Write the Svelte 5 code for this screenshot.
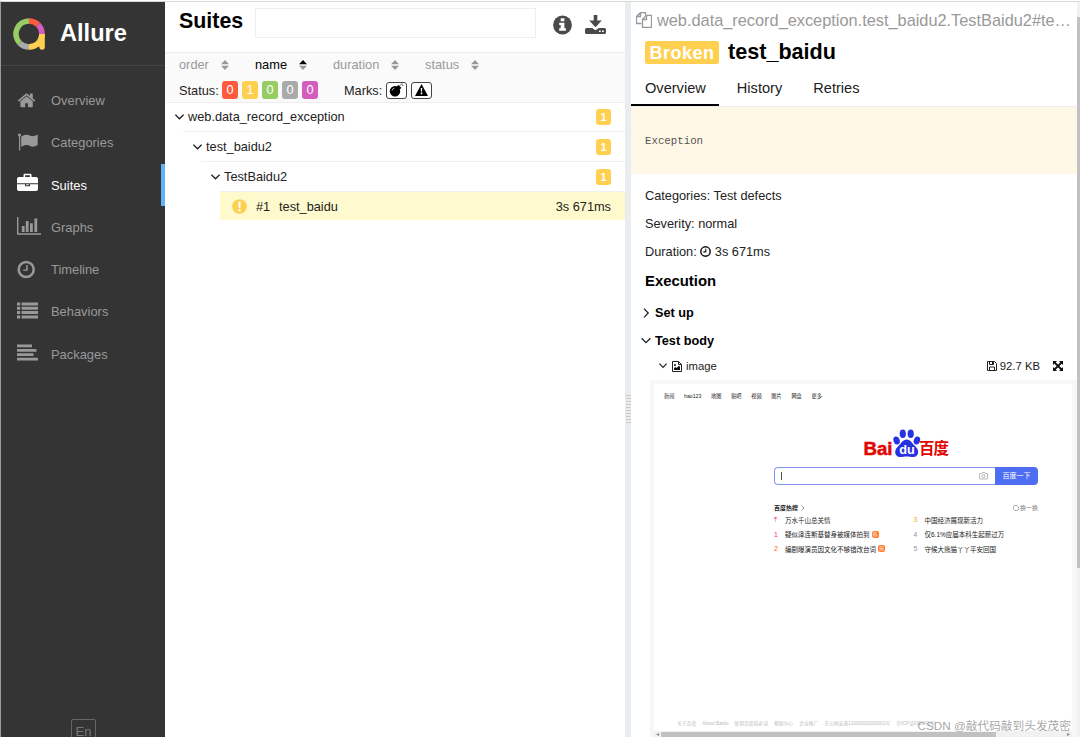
<script lang="ts">
  let activeNav = "Suites";
  let activeTab = "Overview";
  let search = "";

  const nav = ["Overview", "Categories", "Suites", "Graphs", "Timeline", "Behaviors", "Packages"];
  const sorters = [
    { name: "order", width: 76 },
    { name: "name", width: 78 },
    { name: "duration", width: 92 },
    { name: "status", width: 60 },
  ];
  const statuses = [
    { name: "failed", count: 0 },
    { name: "broken", count: 1 },
    { name: "passed", count: 0 },
    { name: "skipped", count: 0 },
    { name: "unknown", count: 0 },
  ];
  const tree = ["web.data_record_exception", "test_baidu2", "TestBaidu2"];
  const tabs = ["Overview", "History", "Retries"];

  const links = ["新闻", "hao123", "地图", "贴吧", "视频", "图片", "网盘", "更多"];
  const hot = [
    { rank: "⤒", color: "#fe2d46", text: "万水千山总关情", tag: false },
    { rank: "3", color: "#faa90e", text: "中国经济展现新活力", tag: false },
    { rank: "1", color: "#fe2d46", text: "疑似泽连斯基替身被媒体拍到", tag: true },
    { rank: "4", color: "#9195a3", text: "仅6.1%应届本科生起薪过万", tag: false },
    { rank: "2", color: "#ff6600", text: "编剧曝演员因文化不够错改台词", tag: true },
    { rank: "5", color: "#9195a3", text: "守候大熊猫丫丫平安回国", tag: false },
  ];
  const footer = ["关于百度", "About Baidu", "使用百度前必读", "帮助中心", "企业推广", "京公网安备11000002000001号", "京ICP证030173号"];
</script>

<div class="page">
  <aside class="side">
    <div class="brand">
      <svg width="32" height="32" viewBox="0 0 32 32" fill="none" stroke-width="5.600">
        <path d="M6.800 25.200A13 13 0 0 1 16 3" stroke="#97cc64" />
        <path d="M16 3a13 13 0 0 1 9.200 3.800" stroke="#fd5a3e" />
        <path d="M25.200 6.800A13 13 0 0 1 29 16" stroke="#d35ebe" />
        <path d="M16 29a13 13 0 0 1-9.200-3.800" stroke="#aaa" />
        <path d="M29 16a13 13 0 0 1-13 13" stroke="#ffd050" />
        <path d="M26.500 16h5.300v13q0 2.700-2.700 2.700T26.400 29l-3-2z" fill="#ffd050" />
      </svg>
      <span>Allure</span>
    </div>
    <nav>
      {#each nav as item}
        <div class="nav-item" class:active={item === activeNav}>
          <svg width="24" height="24" viewBox="0 0 24 24" fill="currentColor">
            {#if item === "Overview"}
              <g transform="translate(0 1.8) scale(.0107)">
                <path d="M1472 992v480q0 26-19 45t-45 19h-384v-384h-256v384h-384q-26 0-45-19t-19-45v-480q0-1 .5-3t.5-3l575-474 575 474q1 2 1 6zm223-69l-62 74q-8 9-21 11h-3q-13 0-21-7l-692-577-692 577q-12 8-24 7-13-2-21-11l-62-74q-8-10-7-23.5t11-21.5l719-599q32-26 76-26t76 26l244 204v-195q0-14 9-23t23-9h192q14 0 23 9t9 23v408l219 182q10 8 11 21.5t-7 23.5z" />
              </g>
            {:else if item === "Categories"}
              <circle cx="2.5" cy="4" r="1.6" />
              <path d="M2 4h1.2v15.5H2zM4.2 5.4c4-2.3 6-2.2 9.2-.6 2 1 4 .4 7.3-1.2V14c-3.4 2-5.3 2.1-7.7.9-2.8-1.4-5-1.1-8.8 1z" />
            {:else if item === "Suites"}
              <path d="M6.5 4V2Q6.5.8 7.7.8h5.6q1.2 0 1.2 1.2v2H19q2 0 2 2v4.3H0V6q0-2 2-2zm1.6 0h4.8V2.3H8.1zM0 11.3h8v2h5v-2h8V16q0 2-2 2H2q-2 0-2-2zm9.2 0h2.6v1H9.2z" />
            {:else if item === "Graphs"}
              <path d="M0 2h1.4v16.2H24v1.6H0zM4.8 11h2.8v6H4.8zM8.8 6h2.8v11H8.8zM13 8.3h2.8V17H13zM17.4 3.6h2.8V17h-2.8z" />
            {:else if item === "Timeline"}
              <circle cx="9.2" cy="11.5" r="7.5" fill="none" stroke="currentColor" stroke-width="2.5" />
              <path d="M9.2 7h1.5v5.8H6.2v-1.4h3z" />
            {:else if item === "Behaviors"}
              <path d="M0 2.5h3.2v3H0zM4.6 2.5H21v3H4.6zM0 6.8h3.2v3H0zM4.6 6.8H21v3H4.6zM0 11.1h3.2v3H0zM4.6 11.1H21v3H4.6zM0 15.4h3.2v3H0zM4.6 15.4H21v3H4.6z" />
            {:else}
              <path d="M0 2.5h15v2.8H0zM0 6.9h19.5v2.8H0zM0 11.3h16.5v2.8H0zM0 15.7h21v2.8H0z" />
            {/if}
          </svg>
          <span>{item}</span>
        </div>
      {/each}
    </nav>
    <button class="lang">En</button>
  </aside>

  <section class="suites">
    <header>
      <h1>Suites</h1>
      <input bind:value={search} aria-label="Search" />
      <svg width="19" height="20" viewBox="0 0 19 20">
        <circle cx="9.5" cy="10" r="9.4" fill="#4a4a4a" />
        <path d="M7.7 3.2h3.7v3H7.7zM6.2 7.7h5.2v5.6h1.5v2.5H6.2v-2.5h1.5V10H6.2z" fill="#fff" />
      </svg>
      <svg class="download" width="22" height="20" viewBox="0 0 22 20" fill="#4a4a4a">
        <path d="M8.7 0h3.6v5.5h4.5l-6.3 6.8L4.2 5.5h4.5z" />
        <path fill-rule="evenodd" d="M1.5 13h5.7l3.3 2.3 3.3-2.3h5.7q1.5 0 1.5 1.5v3q0 1.5-1.5 1.5h-18Q0 19 0 17.500v-3Q0 13 1.500 13zM14 15.500v1.500h1.700v-1.500zm3 0v1.500h1.700v-1.500z" />
      </svg>
    </header>

    <div class="filters">
      <div class="sorters">
        {#each sorters as sorter}
          <div class="sorter" class:on={sorter.name === "name"} style={`width:${sorter.width}px`}>
            <span>{sorter.name}</span>
            <svg width="8" height="10" viewBox="0 0 8 10">
              <path d="M4 0l4 4.300H0z" fill={sorter.name === "name" ? "#000" : "#999"} />
              <path d="M0 5.700h8L4 10z" fill="#999" />
            </svg>
          </div>
        {/each}
      </div>
      <div class="marks">
        <span class="caption">Status:</span>
        {#each statuses as status}
          <span class="count {status.name}">{status.count}</span>
        {/each}
        <span class="caption second">Marks:</span>
        <span class="mark">
          <svg width="15" height="14" viewBox="0 0 15 14">
            <circle cx="6" cy="8.300" r="5.200" />
            <path d="M7.500 3.500l2-1.500 2.800 2.800-1.500 2z" />
            <path d="M10.500 3l2-2M13 0v2M14.500 2.500h-1.500" stroke="#555" fill="none" stroke-width=".8" />
            <path d="M3 7.500q.5-2 2.500-2.400" stroke="#bbb" fill="none" />
          </svg>
        </span>
        <span class="mark">
          <svg width="13" height="12" viewBox="0 0 13 12">
            <path d="M6.500 0L13 12H0z" />
            <path d="M5.700 4h1.600l-.3 3.800h-1zM5.700 8.600h1.600v1.600H5.700z" fill="#fff" />
          </svg>
        </span>
      </div>
    </div>

    <div class="tree">
      {#each tree as node, level}
        <div class="row" style={`margin-left:${level * 18}px`}>
          <div class="node">
            <svg width="9" height="6" viewBox="0 0 9 6" fill="none" stroke="#222" stroke-width="1.300"><path d="M.4.7l4.100 4.100L8.600.7" /></svg>
            <span class="name">{node}</span>
            <span class="badge">1</span>
          </div>
        </div>
      {/each}
      <div class="leaf">
        <svg width="15" height="15" viewBox="0 0 15 15">
          <circle cx="7.500" cy="7.500" r="7.300" fill="#ffd050" />
          <path d="M6.300 2.700h2.400l-.3 6H6.600zM6.300 10h2.400v2.200H6.300z" fill="#fff" />
        </svg>
        <span class="order">#1</span>
        <span>test_baidu</span>
        <span class="time">3s 671ms</span>
      </div>
    </div>
  </section>

  <div class="gutter"><div class="grip"></div></div>

  <main>
    <div class="fullname">
      <svg width="16" height="16" viewBox="0 0 16 16" fill="none" stroke="#999" stroke-width="1.300">
        <path d="M5.500 11.500h-5v-7L4.500.700h5v3M.500 4.500h4v-4" />
        <path d="M6.500 15.300v-8l4-4h5v12zM6.500 7.500h4v-4" />
      </svg>
      <span>web.data_record_exception.test_baidu2.TestBaidu2#test_baidu</span>
    </div>
    <div class="title"><span class="label">Broken</span><h2>test_baidu</h2></div>
    <div class="tabs">
      {#each tabs as tab}
        <div class="tab" class:active={tab === activeTab}>{tab}</div>
      {/each}
    </div>
    <pre>Exception</pre>
    <div class="info">
      <div>Categories: Test defects</div>
      <div>Severity: normal</div>
      <div>
        Duration:
        <svg width="11" height="11" viewBox="0 0 11 11" fill="none" stroke="#111" stroke-width="1.500"><circle cx="5.500" cy="5.500" r="4.700" /><path d="M5.800 2.800v3.100H3.300" stroke-width="1.100" /></svg>
        3s 671ms
      </div>
    </div>
    <h3>Execution</h3>
    <div class="step">
      <svg width="10" height="10" viewBox="0 0 10 10" fill="none" stroke="#222" stroke-width="1.300"><path d="M3 .6L7.200 5 3 9.400" /></svg>
      Set up
    </div>
    <div class="step">
      <svg width="10" height="10" viewBox="0 0 10 10" fill="none" stroke="#222" stroke-width="1.300"><path d="M.6 2.200L5 6.600l4.400-4.400" /></svg>
      Test body
    </div>
    <div class="attachment">
      <svg width="8" height="6" viewBox="0 0 8 6" fill="none" stroke="#222" stroke-width="1.100"><path d="M.4.700L4 4.500 7.600.700" /></svg>
      <svg class="file" width="10" height="11" viewBox="0 0 10 11" fill="none" stroke="#222">
        <path d="M.500.500h6l3 3v7h-9zM6.500.500v3h3" />
        <path d="M2 9V7l1.500-1 1 1L7 4.800l1 1V9z" fill="#111" stroke="none" /><circle cx="3" cy="4" r="1" fill="#111" stroke="none" />
      </svg>
      <span>image</span>
      <svg class="save" width="10" height="10" viewBox="0 0 10 10" fill="none" stroke="#222">
        <path d="M.500.500h7l2 2v7h-9zM2.500.500v3h4v-3M2.500 9.500v-3.500h5v3.500" /><path d="M5 1h1.300v2H5z" fill="#222" stroke="none" />
      </svg>
      <span class="size">92.7 KB</span>
      <svg width="10" height="10" viewBox="0 0 10 10" fill="#111">
        <path d="M0 0h4L0 4zM10 0v4L6 0zM0 10V6l4 4zM10 10H6l4-4z" /><path d="M1 1l8 8M9 1L1 9" stroke="#111" stroke-width="1.800" />
      </svg>
    </div>

    <div class="shot">
      <div class="baidu">
        <div class="links">
          {#each links as link}<span>{link}</span>{/each}
        </div>
        <svg class="logo" width="88" height="30" viewBox="0 0 88 30">
          <text x="0.500" y="25.500" font-size="18.500" font-weight="700" fill="#e10602" stroke="#e10602" stroke-width=".5" textLength="29" lengthAdjust="spacingAndGlyphs">Bai</text>
          <g fill="#2932e1">
            <ellipse cx="33.600" cy="11.500" rx="3.100" ry="4.100" transform="rotate(-18 33.600 11.500)" />
            <ellipse cx="39.800" cy="4.800" rx="3.100" ry="4.300" />
            <ellipse cx="47.700" cy="4.800" rx="3.100" ry="4.300" />
            <ellipse cx="53.900" cy="11.500" rx="3.100" ry="4.100" transform="rotate(18 53.900 11.500)" />
            <path d="M43.700 10.500c4 0 5.800 4.500 9 7.200 4 3.500 3.200 10-2.300 10.300-2.500.1-4-.6-6.700-.6s-4.200.7-6.700.6c-5.500-.3-6.300-6.800-2.300-10.300 3.200-2.700 5-7.200 9-7.200z" />
          </g>
          <text x="36.200" y="25.300" font-size="13" font-weight="700" fill="#fff" textLength="15.500" lengthAdjust="spacingAndGlyphs">du</text>
          <text x="56" y="25" class="cjk" font-size="15.500" font-weight="700" fill="#e10602" textLength="30">百度</text>
        </svg>
        <div class="search">
          <div class="field">
            <i></i>
            <svg width="9" height="8" viewBox="0 0 9 8" fill="none" stroke="#999" stroke-width=".7"><path d="M.500 2q0-.5.500-.5h1.500l.8-1h2.400l.8 1H8q.500 0 .500.500v4.500q0 .5-.5.500H1q-.5 0-.5-.5z" /><circle cx="4.500" cy="4" r="1.600" /></svg>
          </div>
          <div class="go">百度一下</div>
        </div>
        <div class="hot-head">
          <b>百度热搜</b>
          <svg width="4" height="6" viewBox="0 0 4 6" fill="none" stroke="#555" stroke-width=".6"><path d="M.5.500L3 3 .500 5.500" /></svg>
          <svg class="reload" width="6" height="6" viewBox="0 0 6 6" fill="none" stroke="#777" stroke-width=".7"><path d="M1 4.500A2.400 2.400 0 0 1 4.500 1M5 1.500A2.400 2.400 0 0 1 1.500 5" /></svg>
          <span>换一换</span>
        </div>
        <div class="hot">
          {#each hot as item}
            <div class="hot-item">
              <span class="rank" style={`color:${item.color}`}>{item.rank}</span>
              <span>{item.text}</span>
              {#if item.tag}<em>热</em>{/if}
            </div>
          {/each}
        </div>
        <div class="foot">
          {#each footer as item}<span>{item}</span>{/each}
        </div>
      </div>
      <div class="hscroll"><span>◂</span><div></div><span class="end">▸</span></div>
    </div>
  </main>
  <div class="vscroll"><div></div></div>
  <div class="watermark">CSDN @敲代码敲到头发茂密</div>
</div>

<style>
  :global(body) {
    background: #fff;
    overflow: hidden;
  }

  .page {
    position: relative;
    display: flex;
    width: 1080px;
    height: 736px;
    box-sizing: border-box;
    margin-top: 1px;
    border-top: 1px solid #d5d8d8;
    border-left: 1px solid #999;
    font-family: "Liberation Sans", "Noto Sans CJK SC", sans-serif;
    font-size: 12.75px;
    color: #222;
    overflow: hidden;
  }

  h1,
  h2,
  h3,
  pre {
    margin: 0;
    color: #000;
  }

  svg {
    flex: none;
  }

  /* sidebar */
  .side {
    display: flex;
    flex-direction: column;
    width: 164px;
    flex: none;
    background: #343434;
    color: #999;
  }

  .brand {
    display: flex;
    align-items: center;
    gap: 15px;
    height: 63px;
    padding-left: 12px;
    border-bottom: 1px solid #444;
    color: #fff;
    font-size: 23.6px;
    font-weight: 700;
  }

  nav {
    padding-top: 13.4px;
  }

  .nav-item {
    display: flex;
    align-items: center;
    gap: 10px;
    height: 42.25px;
    padding-left: 16px;
    font-size: 12.9px;
  }

  .nav-item.active {
    color: #fff;
    border-right: 4px solid #5eb4f5;
  }

  .lang {
    width: 25px;
    height: 24px;
    margin: auto 0 -6px 70px;
    padding: 0;
    background: none;
    border: 1px solid #666;
    border-radius: 2px;
    color: #777;
    font: 13px "Liberation Sans", sans-serif;
  }

  /* suites */
  .suites {
    width: 460px;
    flex: none;
  }

  header {
    display: flex;
    height: 51px;
    box-sizing: border-box;
    padding: 6px 0 0 14px;
    border-bottom: 1px solid #eceeef;
  }

  h1 {
    width: 76px;
    font-size: 21.4px;
    line-height: 26px;
  }

  header input {
    width: 281px;
    height: 30px;
    box-sizing: border-box;
    margin-right: 17px;
    border: 1px solid #eceeef;
  }

  header svg {
    margin-top: 7px;
  }

  header .download {
    margin: 7px 0 0 13px;
  }

  .filters {
    height: 50px;
    box-sizing: border-box;
    padding: 3px 0 0 14px;
    background: #fafafa;
    border-bottom: 1px solid #eceeef;
  }

  .sorters {
    display: flex;
    height: 17px;
    color: #999;
  }

  .sorter {
    display: flex;
    align-items: center;
    gap: 12px;
    font-size: 12.8px;
  }

  .sorter.on {
    color: #000;
  }

  .marks {
    display: flex;
    align-items: center;
    gap: 4px;
    height: 18px;
    margin-top: 8px;
  }

  .caption {
    width: 39px;
  }

  .caption.second {
    margin-left: 22px;
    width: 38px;
  }

  .count,
  .badge {
    width: 16px;
    height: 18px;
    border-radius: 3px;
    color: #fff;
    text-align: center;
    line-height: 18px;
  }

  .failed {
    background: #fd5a3e;
  }

  .broken,
  .badge {
    background: #ffd050;
  }

  .passed {
    background: #97cc64;
  }

  .skipped {
    background: #aaa;
  }

  .unknown {
    background: #d35ebe;
  }

  .mark {
    display: grid;
    place-items: center;
    width: 19px;
    height: 15px;
    background: #fff;
    border: 1px solid #444;
    border-radius: 3px;
  }

  .row {
    padding-left: 10px;
  }

  .node {
    display: flex;
    align-items: center;
    height: 29px;
    padding-right: 14px;
  }

  .row:first-child .node {
    height: 28px;
  }

  .row:first-child .name {
    margin-bottom: 1px;
  }

  .row + .row,
  .leaf {
    border-top: 1px solid #f0f1f2;
  }

  .name {
    margin-left: 4px;
    margin-bottom: 1px;
  }

  .badge {
    width: 15px;
    height: 16px;
    margin-left: auto;
    font-size: 11px;
    font-weight: 700;
    line-height: 16px;
  }

  .leaf {
    display: flex;
    align-items: center;
    height: 28px;
    margin: 0 0 0 55px;
    padding: 0 14px 0 12px;
    background: #fffacd;
  }

  .order {
    width: 23px;
    margin-left: 9px;
  }

  .time {
    margin-left: auto;
  }

  .gutter {
    display: flex;
    align-items: center;
    justify-content: flex-end;
    width: 6px;
    flex: none;
    padding-top: 78px;
    box-sizing: border-box;
    background: #eaedf0;
  }

  .grip {
    width: 5px;
    height: 28px;
    background: repeating-linear-gradient(#c8caca 0 1px, transparent 1px 3px);
  }

  /* test result */
  main {
    width: 446px;
    flex: none;
    overflow: hidden;
  }

  .fullname {
    display: flex;
    align-items: center;
    gap: 5px;
    height: 36px;
    padding: 0 4px 0 5px;
    color: #999;
    font-size: 16.33px;
  }

  .fullname span {
    overflow: hidden;
    text-overflow: ellipsis;
    white-space: nowrap;
  }

  .title {
    display: flex;
    align-items: center;
    gap: 9px;
    height: 28px;
    padding-left: 14px;
  }

  .label {
    width: 74px;
    height: 23px;
    margin-top: 1px;
    background: #ffd050;
    border-radius: 2px;
    color: #fff;
    font-size: 18px;
    font-weight: 700;
    letter-spacing: 0.5px;
    line-height: 24px;
    text-align: center;
  }

  h2 {
    font-size: 21.6px;
    line-height: 26px;
  }

  .tabs {
    display: flex;
    height: 41px;
    box-sizing: border-box;
    padding-top: 6px;
    border-bottom: 1px solid #eceeef;
    font-size: 14.6px;
    line-height: 33px;
  }

  .tab {
    height: 32px;
    padding: 0 17px 0 14px;
    border-bottom: 2px solid transparent;
  }

  .tab.active {
    border-bottom-color: #000;
    padding-right: 13px;
  }

  .tab:nth-child(2) {
    padding-left: 18px;
  }

  pre {
    height: 67px;
    padding-left: 14px;
    background: #fff8e6;
    color: #555;
    font: 10.75px/69px "Liberation Mono", monospace;
  }

  .info {
    padding: 8px 0 0 14px;
    line-height: 28.2px;
  }

  .info svg {
    vertical-align: -1px;
  }

  h3 {
    padding: 0 0 3px 14px;
    font-size: 14.9px;
    line-height: 29px;
  }

  .step {
    display: flex;
    align-items: center;
    gap: 4px;
    height: 28px;
    padding-left: 10px;
    color: #000;
    font-size: 12.7px;
    font-weight: 700;
  }

  .attachment {
    display: flex;
    align-items: center;
    height: 23px;
    padding: 0 14px 0 28px;
    font-size: 11.3px;
  }

  .file {
    margin: 0 4px 0 5px;
  }

  .save {
    margin: 0 3px 0 auto;
  }

  .size {
    margin-right: 13px;
  }

  .shot {
    display: flex;
    flex-direction: column;
    height: 358px;
    box-sizing: border-box;
    margin: 2px 0 0 19px;
    padding: 4px 5px 0 4px;
    background: #f7f7f7;
  }

  .baidu {
    display: flex;
    flex-direction: column;
    height: 347px;
    flex: none;
    background: #fff;
    overflow: hidden;
    font-size: 6.5px;
    white-space: nowrap;
  }

  .links {
    display: flex;
    gap: 9.7px;
    padding: 8px 0 0 10px;
    font-size: 5.2px;
    line-height: 9px;
  }

  .logo {
    margin: 28px 0 0 209px;
  }

  .cjk {
    font-family: "Noto Sans CJK SC", sans-serif;
  }

  .search {
    display: flex;
    width: 264px;
    height: 18px;
    margin: 8px 0 0 120px;
  }

  .field {
    display: flex;
    align-items: center;
    justify-content: space-between;
    flex: 1;
    padding: 0 7px 0 6px;
    border: 1px solid #8294f6;
    border-right: 0;
    border-radius: 4px 0 0 4px;
  }

  .field i {
    width: 1px;
    height: 8px;
    background: #555;
  }

  .go {
    width: 43px;
    background: #4e6ef2;
    border-radius: 0 4px 4px 0;
    color: #fff;
    font-size: 7px;
    line-height: 18px;
    text-align: center;
  }

  .hot-head {
    display: flex;
    align-items: center;
    width: 264px;
    height: 10px;
    margin: 18px 0 0 120px;
    font-size: 6px;
  }

  .hot-head b {
    margin-right: 3px;
  }

  .reload {
    margin: 0 1px 0 auto;
  }

  .hot-head span {
    color: #777;
  }

  .hot {
    display: grid;
    grid-template-columns: 139.5px 1fr;
    grid-auto-rows: 14.4px;
    margin: 0 0 0 120px;
  }

  .hot-item {
    display: flex;
    align-items: center;
  }

  .rank {
    width: 11px;
    font-size: 7px;
  }

  .hot-item em {
    width: 7px;
    height: 7px;
    margin-left: 2px;
    background: #ff7626;
    border-radius: 2px;
    color: #fff;
    font-size: 5px;
    font-style: normal;
    line-height: 7px;
    text-align: center;
  }

  .foot {
    display: flex;
    align-items: baseline;
    gap: 6px;
    margin: auto 0 5px 23px;
    color: #bbb;
    font-size: 4.8px;
  }

  .hscroll {
    display: flex;
    align-items: center;
    height: 7px;
    background: #f1f1f1;
    color: #888;
    font-size: 6px;
    line-height: 6px;
  }

  .hscroll span {
    width: 7px;
    text-align: center;
  }

  .hscroll div {
    width: 335px;
    height: 5px;
    background: #c1c1c1;
  }

  .hscroll .end {
    margin-left: auto;
  }

  .vscroll {
    flex: 1;
    padding-top: 15px;
    background: #f1f1f1;
  }

  .vscroll div {
    height: 551px;
    background: #c1c1c1;
  }

  .watermark {
    position: absolute;
    right: 9px;
    bottom: 2px;
    color: #777777aa;
    font-size: 11.7px;
    line-height: 18px;
  }
</style>
